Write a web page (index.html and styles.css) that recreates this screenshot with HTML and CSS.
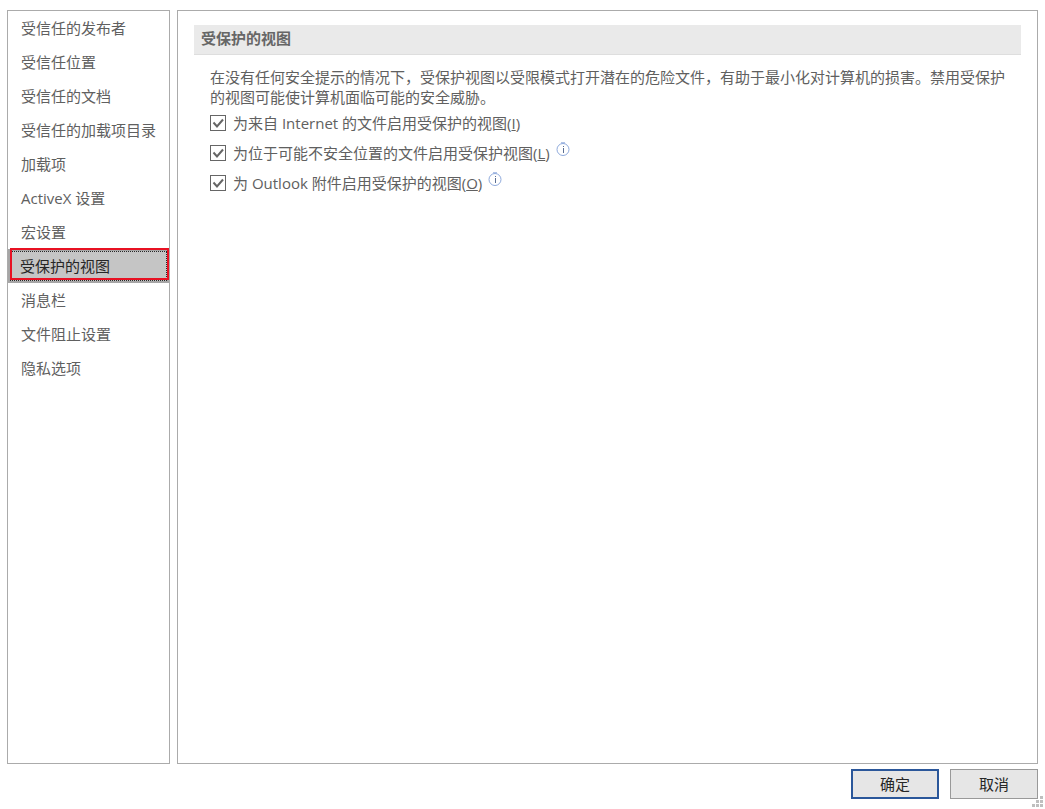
FILE: index.html
```html
<!DOCTYPE html>
<html lang="zh-CN">
<head>
  <meta charset="UTF-8">
  <title>信任中心</title>
  <link rel="stylesheet" href="styles.css">
</head>
<body>
  <div class="panes">
    <!-- Category list -->
    <nav class="categories">
      <button type="button">受信任的发布者</button>
      <button type="button">受信任位置</button>
      <button type="button">受信任的文档</button>
      <button type="button">受信任的加载项目录</button>
      <button type="button">加载项</button>
      <button type="button">ActiveX 设置</button>
      <button type="button">宏设置</button>
      <button type="button" class="selected">受保护的视图</button>
      <button type="button">消息栏</button>
      <button type="button">文件阻止设置</button>
      <button type="button">隐私选项</button>
    </nav>

    <!-- Protected view settings -->
    <main class="settings">
      <h1>受保护的视图</h1>
      <div class="content">
        <p>在没有任何安全提示的情况下，受保护视图以受限模式打开潜在的危险文件，有助于最小化对计算机的损害。禁用受保护的视图可能使计算机面临可能的安全威胁。</p>
        <div class="option">
          <input type="checkbox" id="pv_internet" checked>
          <label for="pv_internet">为来自 Internet 的文件启用受保护的视图(<u>I</u>)</label>
        </div>
        <div class="option">
          <input type="checkbox" id="pv_location" checked>
          <label for="pv_location">为位于可能不安全位置的文件启用受保护视图(<u>L</u>)</label>
          <svg class="info" viewBox="0 0 14 14">
            <circle cx="7" cy="7.5" r="6"/>
            <path d="M5 .8h4"/>
            <path class="mark" d="M7.5 4v1M7.5 6v5"/>
          </svg>
        </div>
        <div class="option">
          <input type="checkbox" id="pv_outlook" checked>
          <label for="pv_outlook">为 Outlook 附件启用受保护的视图(<u>O</u>)</label>
          <svg class="info" viewBox="0 0 14 14">
            <circle cx="7" cy="7.5" r="6"/>
            <path d="M5 .8h4"/>
            <path class="mark" d="M7.5 4v1M7.5 6v5"/>
          </svg>
        </div>
      </div>
    </main>
  </div>

  <footer>
    <button type="button" class="default">确定</button>
    <button type="button">取消</button>
  </footer>

  <svg class="grip" viewBox="0 0 11 11">
    <path d="M8 0h3v3h-3zM4 4h3v3h-3zM8 4h3v3h-3zM0 8h3v3h-3zM4 8h3v3h-3zM8 8h3v3h-3z"/>
  </svg>
</body>
</html>
```
FILE: styles.css
```css
* {
  box-sizing: border-box;
}
body {
  display: flex;
  flex-direction: column;
  height: 100vh;
  margin: 0;
  padding: 10px 7px;
  background-color: #fff;
  color: #606060;
  font-family: "Open Sans", "Noto Sans CJK SC", sans-serif;
  font-size: 15px;
  line-height: 20px;
}
button {
  font: inherit;
}
.panes {
  display: flex;
  flex: 1;
  gap: 7px;
}
.categories {
  width: 163px;
  border: 1px solid #ababab;
}
.categories button {
  display: block;
  width: 100%;
  height: 34px;
  padding: 0 13px;
  border: none;
  background: none;
  color: inherit;
  text-align: left;
  white-space: nowrap;
}
.categories .selected {
  position: relative;
  padding: 0 10px;
  border: 2px solid #a6a6a6;
  background-color: #c5c5c5;
  color: #262626;
  outline: 1px dotted #262626;
  outline-offset: -3px;
}
/* Red highlight over the selected category */
.categories .selected::after {
  content: "";
  position: absolute;
  top: -3px;
  right: -2px;
  bottom: 1px;
  left: 0;
  border: 2px solid #e81123;
}
.settings {
  flex: 1;
  padding: 14px 16px;
  border: 1px solid #ababab;
}
h1 {
  margin: 0;
  padding: 3px 7px 5px;
  border-bottom: 1px solid #dedede;
  background-color: #eaeaea;
  color: #666;
  font-size: 15px;
  font-weight: bold;
  line-height: 21px;
}
.content {
  padding: 12px 14px 0 16px;
}
p {
  margin: 0 0 1px;
}
.option {
  display: flex;
  align-items: center;
  height: 30px;
}
.option input {
  appearance: none;
  width: 16px;
  height: 16px;
  margin: 0 7px 0 0;
  border: 1px solid #666;
}
.option input:checked {
  background: url("data:image/svg+xml,%3Csvg xmlns='http://www.w3.org/2000/svg' viewBox='0 0 14 14'%3E%3Cpath d='M2.5 6.5l3.5 4L12 3.5' fill='none' stroke='%23666' stroke-width='2'/%3E%3C/svg%3E");
}
.info {
  align-self: flex-start;
  width: 14px;
  height: 14px;
  margin: 4px 0 0 6px;
  fill: none;
  stroke: #8faadc;
}
.info .mark {
  stroke: #5b6f94;
}
footer {
  display: flex;
  justify-content: flex-end;
  gap: 11px;
  padding-top: 5px;
}
footer button {
  width: 88px;
  height: 30px;
  padding: 0;
  border: 1px solid #999;
  background-color: #e6e6e6;
  color: #262626;
}
footer .default {
  border: 2px solid #2b579a;
}
/* Window resize grip */
.grip {
  position: absolute;
  right: 2px;
  bottom: 2px;
  width: 11px;
  height: 11px;
  fill: #bfbfbf;
}
```
